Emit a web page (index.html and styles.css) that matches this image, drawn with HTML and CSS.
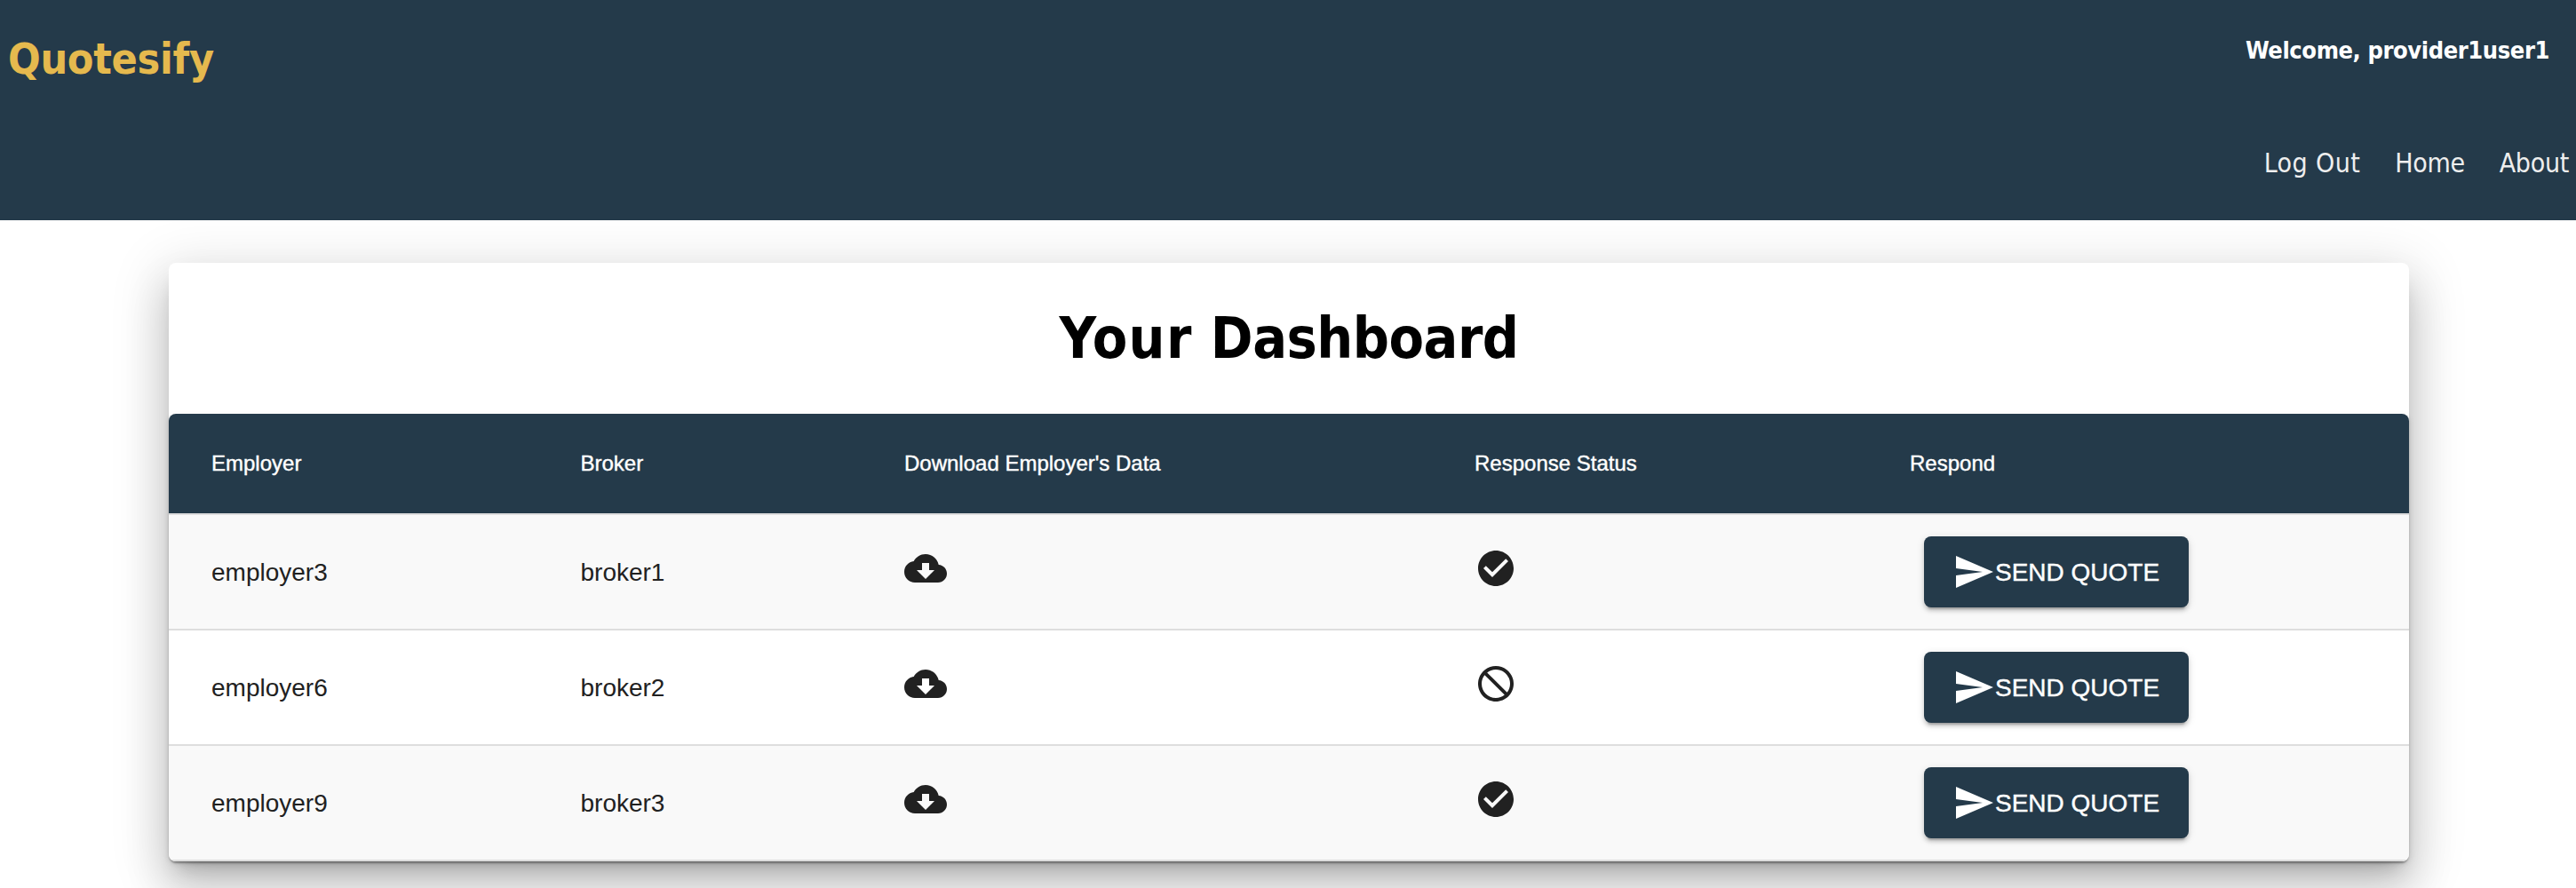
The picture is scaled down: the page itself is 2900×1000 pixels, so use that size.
FILE: index.html
```html
<!DOCTYPE html>
<html lang="en">
<head>
<meta charset="utf-8">
<title>Quotesify</title>
<link rel="stylesheet" href="styles.css">
</head>
<body>
<svg class="sprite" aria-hidden="true">
  <symbol id="cloud" viewBox="0 0 24 24"><path d="M19.35 10.04C18.67 6.59 15.64 4 12 4 9.11 4 6.6 5.64 5.35 8.04 2.34 8.36 0 10.91 0 14c0 3.31 2.69 6 6 6h13c2.76 0 5-2.24 5-5 0-2.64-2.05-4.78-4.65-4.96zM17 13l-5 5-5-5h3V9h4v4h3z"/></symbol>
  <symbol id="check" viewBox="0 0 24 24"><path d="M12 2C6.48 2 2 6.48 2 12s4.48 10 10 10 10-4.48 10-10S17.52 2 12 2zm-2 15l-5-5 1.41-1.41L10 14.17l7.59-7.59L19 8l-9 9z"/></symbol>
  <symbol id="block" viewBox="0 0 24 24"><path d="M12 2C6.48 2 2 6.48 2 12s4.48 10 10 10 10-4.48 10-10S17.52 2 12 2zM4 12c0-4.42 3.58-8 8-8 1.85 0 3.55.63 4.9 1.69L5.69 16.9C4.63 15.55 4 13.85 4 12zm8 8c-1.85 0-3.55-.63-4.9-1.69L18.31 7.1C19.37 8.45 20 10.15 20 12c0 4.42-3.58 8-8 8z" transform="matrix(-1 0 0 1 24 0)"/></symbol>
  <symbol id="send" viewBox="0 0 24 24"><path d="M2.01 21L23 12 2.01 3 2 10l15 2-15 2z"/></symbol>
</svg>
<header class="site-header">
  <h1 class="logo">Quotesify</h1>
  <div class="account">
    <p class="welcome">Welcome, provider1user1</p>
    <nav class="nav">
      <a class="nav-link logout">Log Out</a>
      <a class="nav-link home">Home</a>
      <a class="nav-link about">About</a>
    </nav>
  </div>
</header>
<main class="card">
  <h2 class="title"><span class="title-first">Your</span> <span class="title-second">Dashboard</span></h2>
  <div class="table">
    <div class="row head">
      <span>Employer</span><span>Broker</span><span>Download Employer's Data</span><span>Response Status</span><span>Respond</span>
    </div>
    <div class="row">
      <span>employer3</span><span>broker1</span>
      <svg class="icon"><use href="#cloud"/></svg>
      <svg class="icon"><use href="#check"/></svg>
      <button class="send"><svg class="send-icon"><use href="#send"/></svg><span class="send-label">SEND QUOTE</span></button>
    </div>
    <div class="row">
      <span>employer6</span><span>broker2</span>
      <svg class="icon"><use href="#cloud"/></svg>
      <svg class="icon"><use href="#block"/></svg>
      <button class="send"><svg class="send-icon"><use href="#send"/></svg><span class="send-label">SEND QUOTE</span></button>
    </div>
    <div class="row">
      <span>employer9</span><span>broker3</span>
      <svg class="icon"><use href="#cloud"/></svg>
      <svg class="icon"><use href="#check"/></svg>
      <button class="send"><svg class="send-icon"><use href="#send"/></svg><span class="send-label">SEND QUOTE</span></button>
    </div>
  </div>
</main>
</body>
</html>
```
FILE: styles.css
```css
* { box-sizing: border-box; }

body {
  margin: 0;
  height: 1000px;
  overflow: hidden;
  background: #fff;
  font-family: "Liberation Sans", Arial, sans-serif;
}

.sprite { display: none; }

.site-header {
  position: relative;
  z-index: 1;
  display: flex;
  justify-content: space-between;
  height: 248px;
  padding: 36px 8px 0 9px;
  background: #243a4a;
  font-family: "DejaVu Sans Condensed", "DejaVu Sans", Tahoma, sans-serif;
  font-stretch: condensed;
  white-space: nowrap;
}

.logo {
  margin: 0;
  color: #e5b94e;
  font-size: 48px;
  line-height: 60px;
  letter-spacing: -0.3px;
}

.account {
  display: flex;
  flex-direction: column;
  align-items: flex-end;
}

.welcome {
  margin: 1px 22px 0 0;
  color: #fff;
  font-size: 27px;
  font-weight: bold;
  line-height: 40px;
  letter-spacing: -0.4px;
}

.nav {
  display: flex;
  gap: 39px;
  margin-top: 87px;
  color: #eee;
  font-size: 30px;
  line-height: 40px;
  letter-spacing: -0.3px;
}

.logout { letter-spacing: 0.4px; }

.card {
  width: 2522px;
  height: 674px;
  margin: 48px 0 0 190px;
  border-radius: 8px;
  background: #fff;
  box-shadow: 0 16px 20px -10px rgba(0, 0, 0, .2), 0 32px 48px 4px rgba(0, 0, 0, .14), 0 12px 60px 10px rgba(0, 0, 0, .12);
}

.title {
  height: 170px;
  margin: 0;
  padding-top: 45px;
  font-family: "DejaVu Sans Condensed", "DejaVu Sans", Tahoma, sans-serif;
  font-stretch: condensed;
  font-size: 64px;
  line-height: 80px;
  text-align: center;
  color: #000;
}

.title-first { letter-spacing: 1.4px; }

.title-second { letter-spacing: -0.5px; }

.table {
  overflow: hidden;
  border-radius: 8px;
  box-shadow: 0 4px 2px -2px rgba(0, 0, 0, .2), 0 2px 2px rgba(0, 0, 0, .14), 0 2px 6px rgba(0, 0, 0, .12);
}

.row {
  display: grid;
  grid-template-columns: 415.5px 364.5px 642px 490px 1fr;
  align-items: center;
  height: 130px;
  padding: 1px 0 0 48px;
  border-bottom: 2px solid #dedede;
  color: #212121;
  font-size: 28px;
  line-height: 40px;
  white-space: nowrap;
}

.row:nth-child(even) { background: #f9f9f9; }

.head {
  height: 114px;
  padding-top: 0;
  background: #243a4a;
  color: #fff;
  font-size: 24px;
  -webkit-text-stroke: 0.4px #fff;
}

.icon {
  width: 48px;
  height: 48px;
  margin-bottom: 9px;
  fill: #212121;
}

.send {
  display: flex;
  align-items: center;
  width: 298px;
  height: 80px;
  margin: 0 0 1px 16px;
  padding: 0 32px;
  border: 0;
  border-radius: 8px;
  background: #243a4a;
  color: #fff;
  font: 28px/40px "Liberation Sans", Arial, sans-serif;
  -webkit-text-stroke: 0.4px #fff;
  box-shadow: 0 6px 2px -4px rgba(0, 0, 0, .2), 0 4px 4px rgba(0, 0, 0, .14), 0 2px 10px rgba(0, 0, 0, .12);
}

.send-icon {
  flex: none;
  width: 48px;
  height: 48px;
  fill: #fff;
}

.send-label { padding-top: 1px; }
```
